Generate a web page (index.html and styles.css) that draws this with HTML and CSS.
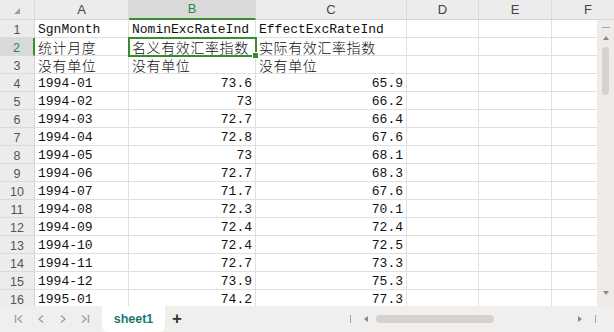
FILE: index.html
```html
<!DOCTYPE html>
<html lang="zh">
<head>
  <meta charset="UTF-8" />
  <title>sheet1</title>
  <link rel="stylesheet" href="styles.css">
</head>
<body>

<div class="app">
  <div class="main">
    <div class="sheet">
      <div class="row head">
        <div class="corner"><span class="tri"></span></div>
        <div>A</div>
        <div class="on">B</div>
        <div>C</div>
        <div>D</div>
        <div>E</div>
        <div>F</div>
      </div>
      <div class="row"><div class="rn">1</div><div>SgnMonth</div><div>NominExcRateInd</div><div>EffectExcRateInd</div><div></div><div></div><div></div></div>
      <div class="row"><div class="rn on">2</div><div><span class="zh">统计月度</span></div><div class="sel"><span class="zh">名义有效汇率指数</span></div><div><span class="zh">实际有效汇率指数</span></div><div></div><div></div><div></div></div>
      <div class="row"><div class="rn">3</div><div><span class="zh">没有单位</span></div><div><span class="zh">没有单位</span></div><div><span class="zh">没有单位</span></div><div></div><div></div><div></div></div>
      <div class="row"><div class="rn">4</div><div>1994-01</div><div class="num">73.6</div><div class="num">65.9</div><div></div><div></div><div></div></div>
      <div class="row"><div class="rn">5</div><div>1994-02</div><div class="num">73</div><div class="num">66.2</div><div></div><div></div><div></div></div>
      <div class="row"><div class="rn">6</div><div>1994-03</div><div class="num">72.7</div><div class="num">66.4</div><div></div><div></div><div></div></div>
      <div class="row"><div class="rn">7</div><div>1994-04</div><div class="num">72.8</div><div class="num">67.6</div><div></div><div></div><div></div></div>
      <div class="row"><div class="rn">8</div><div>1994-05</div><div class="num">73</div><div class="num">68.1</div><div></div><div></div><div></div></div>
      <div class="row"><div class="rn">9</div><div>1994-06</div><div class="num">72.7</div><div class="num">68.3</div><div></div><div></div><div></div></div>
      <div class="row"><div class="rn">10</div><div>1994-07</div><div class="num">71.7</div><div class="num">67.6</div><div></div><div></div><div></div></div>
      <div class="row"><div class="rn">11</div><div>1994-08</div><div class="num">72.3</div><div class="num">70.1</div><div></div><div></div><div></div></div>
      <div class="row"><div class="rn">12</div><div>1994-09</div><div class="num">72.4</div><div class="num">72.4</div><div></div><div></div><div></div></div>
      <div class="row"><div class="rn">13</div><div>1994-10</div><div class="num">72.4</div><div class="num">72.5</div><div></div><div></div><div></div></div>
      <div class="row"><div class="rn">14</div><div>1994-11</div><div class="num">72.7</div><div class="num">73.3</div><div></div><div></div><div></div></div>
      <div class="row"><div class="rn">15</div><div>1994-12</div><div class="num">73.9</div><div class="num">75.3</div><div></div><div></div><div></div></div>
      <div class="row"><div class="rn">16</div><div>1995-01</div><div class="num">74.2</div><div class="num">77.3</div><div></div><div></div><div></div></div>
    </div>

    <div class="vscroll">
      <div class="vs-head"></div>
      <div class="vs-track">
        <span class="vs-dash"></span>
        <svg class="vs-arrow" width="8" height="6" viewBox="0 0 8 6"><polygon points="4,1 7,5 1,5" fill="#8a8a8a"/></svg>
        <span class="vs-thumb"></span>
        <span class="grow"></span>
        <svg class="vs-arrow down" width="8" height="6" viewBox="0 0 8 6"><polygon points="1,1 7,1 4,5" fill="#8a8a8a"/></svg>
      </div>
    </div>
  </div>

  <div class="tabbar">
    <div class="nav">
      <svg width="10" height="10" viewBox="0 0 10 10"><path d="M1.5 1v8M8 1.5L4 5l4 3.5" fill="none" stroke="#a3a3a3" stroke-width="1.5"/></svg>
      <svg width="10" height="10" viewBox="0 0 10 10"><path d="M7 1.5L3 5l4 3.5" fill="none" stroke="#a3a3a3" stroke-width="1.5"/></svg>
      <svg width="10" height="10" viewBox="0 0 10 10"><path d="M3 1.5L7 5l-4 3.5" fill="none" stroke="#a3a3a3" stroke-width="1.5"/></svg>
      <svg width="10" height="10" viewBox="0 0 10 10"><path d="M2 1.5L6 5l-4 3.5M8.5 1v8" fill="none" stroke="#a3a3a3" stroke-width="1.5"/></svg>
    </div>
    <div class="tab">sheet1</div>
    <div class="add">+</div>
    <div class="hscroll">
      <span class="hs-bar"></span>
      <svg width="6" height="8" viewBox="0 0 6 8"><polygon points="1,4 5,1 5,7" fill="#8a8a8a"/></svg>
      <span class="hs-thumb"></span>
      <span class="grow"></span>
      <svg width="6" height="8" viewBox="0 0 6 8"><polygon points="1,1 5,4 1,7" fill="#8a8a8a"/></svg>
      <span class="hs-bar"></span>
    </div>
  </div>
</div>

</body>
</html>
```

FILE: styles.css
```css
body {
  margin: 0;
  font-family: "Liberation Mono", monospace;
  font-size: 13px;
  color: #111;
  background: #fff;
}

.app {
  width: 614px;
  height: 332px;
  display: flex;
  flex-direction: column;
  overflow: hidden;
}

.main {
  flex: 1;
  display: flex;
  min-height: 0;
}

.sheet {
  flex: 1;
  min-width: 0;
  overflow: hidden;
}

.row {
  display: grid;
  grid-template-columns: 35px 94px 127px 151px 72px 73px 73px;
  height: 18px;
}

.row > div {
  box-sizing: border-box;
  border-right: 1px solid #e0e0e0;
  border-bottom: 1px solid #e0e0e0;
  padding: 0 3px;
  height: 18px;
  line-height: 20px;
  white-space: nowrap;
  overflow: hidden;
}

.zh {
  display: inline-block;
  vertical-align: top;
  height: 17px;
  margin-top: 1px;
  font-family: "Noto Sans CJK SC", sans-serif;
  font-size: 14px;
  font-weight: 300;
  line-height: 16px;
  letter-spacing: 0.6px;
}

.num {
  text-align: right;
}

/* column headers */
.head {
  height: 20px;
}

.row.head > div {
  height: 20px;
  background: #ececec;
  border-right-color: #dadada;
  border-bottom-color: #d6d6d6;
  font-family: "Liberation Sans", sans-serif;
  font-size: 13px;
  color: #444;
  text-align: center;
  line-height: 19px;
  padding: 0;
}

.row.head > div.on {
  background: #d9d9d9;
  color: #2d8a3a;
  border-bottom: 2px solid #3a8a30;
  line-height: 18px;
}

.corner {
  position: relative;
}

.tri {
  position: absolute;
  right: 14px;
  bottom: 5px;
  width: 0;
  height: 0;
  border-left: 6px solid transparent;
  border-bottom: 6px solid #9d9d9d;
}

/* row numbers */
.row > .rn {
  background: #ececec;
  border-right-color: #d6d6d6;
  border-bottom-color: #dadada;
  font-family: "Liberation Sans", sans-serif;
  font-size: 12.5px;
  color: #555;
  text-align: center;
  padding: 0;
}

.row > .rn.on {
  background: #d9d9d9;
  color: #1f7f74;
  border-right: 2px solid #3a8a30;
}

/* active cell */
.row > .sel {
  position: relative;
  overflow: visible;
  outline: 2px solid #3a8a30;
  outline-offset: -1px;
  z-index: 1;
}

.sel::after {
  content: "";
  position: absolute;
  right: -4px;
  bottom: -4px;
  width: 5px;
  height: 5px;
  background: #3a8a30;
  border: 1px solid #fff;
}

/* vertical scrollbar */
.vscroll {
  width: 17px;
  display: flex;
  flex-direction: column;
}

.vs-head {
  height: 20px;
  background: #ececec;
  border-bottom: 1px solid #d6d6d6;
  box-sizing: border-box;
}

.vs-track {
  flex: 1;
  background: #eeebe9;
  display: flex;
  flex-direction: column;
  align-items: center;
  padding-top: 7px;
}

.vs-dash {
  width: 8px;
  height: 1px;
  background: #a3a3a3;
  margin-left: 1px;
}

.vs-arrow {
  margin-top: 7px;
}

.vs-thumb {
  width: 7px;
  height: 48px;
  margin-top: 6px;
  border-radius: 4px;
  background: #d5d2d0;
}

.vs-arrow.down {
  margin: 0 0 10px;
}

.grow {
  flex: 1;
}

/* bottom sheet tabs */
.tabbar {
  height: 26px;
  background: #f1efed;
  display: flex;
  align-items: center;
}

.nav {
  display: flex;
  gap: 12px;
  margin-left: 14px;
  width: 88px;
}

.tab {
  align-self: stretch;
  width: 63px;
  background: #fff;
  border-radius: 0 0 6px 6px;
  font-family: "Liberation Sans", sans-serif;
  font-weight: bold;
  font-size: 12.5px;
  color: #187a6e;
  text-align: center;
  line-height: 26px;
}

.add {
  margin-left: 7px;
  font-family: "Liberation Sans", sans-serif;
  font-weight: bold;
  font-size: 17px;
  color: #333;
}

.hscroll {
  margin-left: auto;
  width: 246px;
  margin-right: 18px;
  display: flex;
  align-items: center;
}

.hs-bar {
  width: 1px;
  height: 8px;
  background: #a3a3a3;
}

.hscroll svg:first-of-type {
  margin-left: 12px;
}

.hs-thumb {
  width: 118px;
  height: 8px;
  margin-left: 7px;
  border-radius: 4px;
  background: #d5d2d0;
}

.hscroll svg:last-of-type {
  margin-right: 12px;
}
```
